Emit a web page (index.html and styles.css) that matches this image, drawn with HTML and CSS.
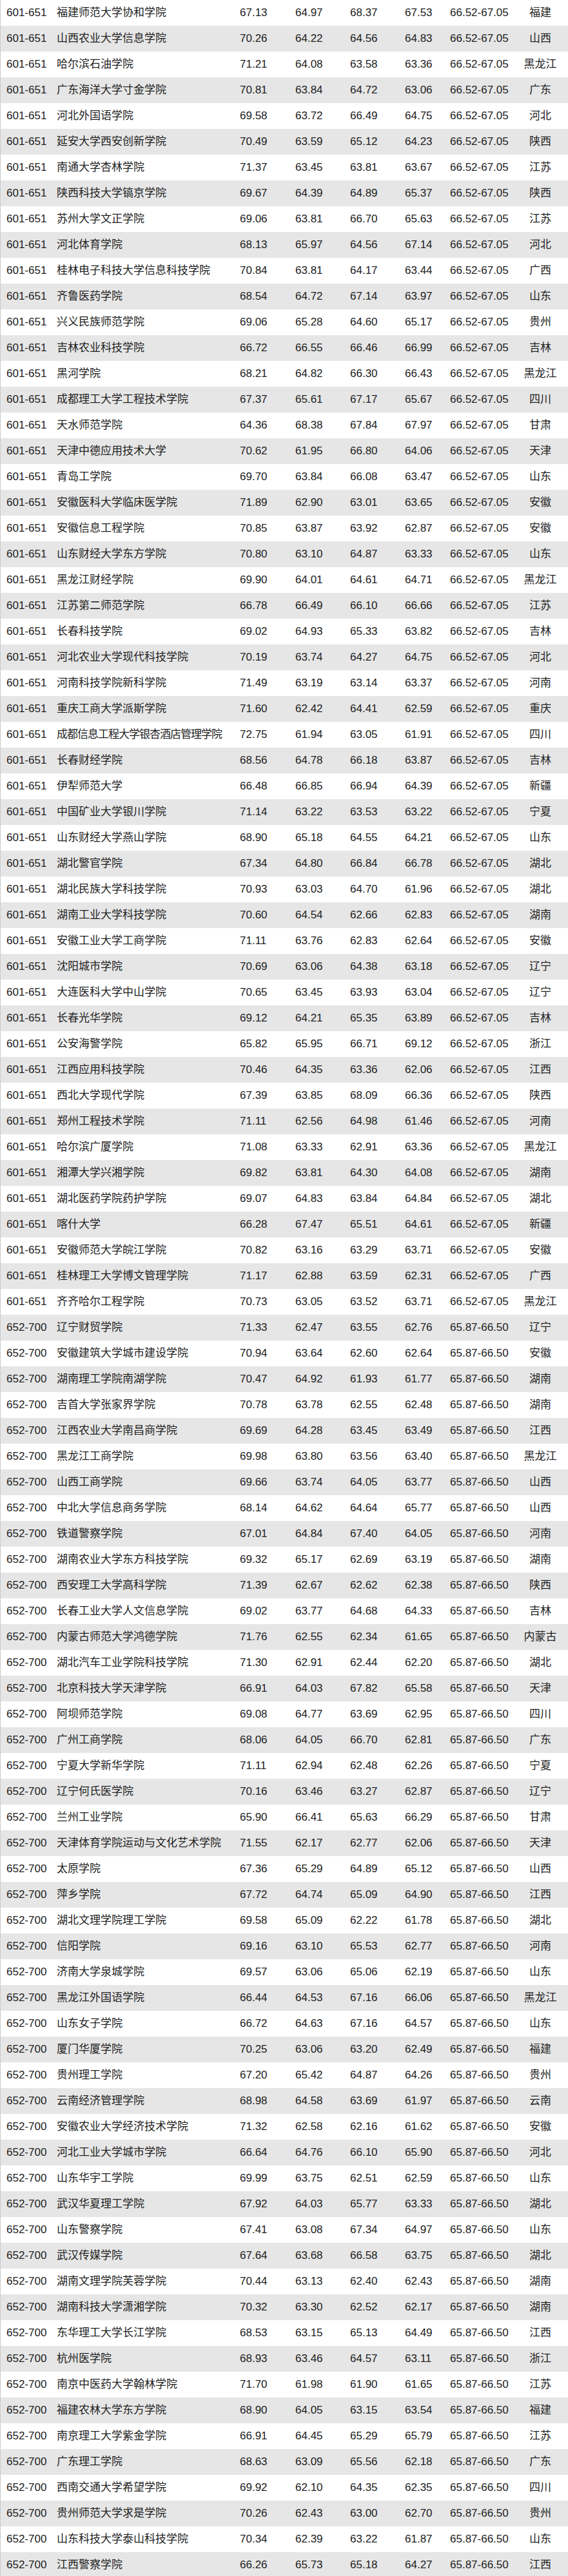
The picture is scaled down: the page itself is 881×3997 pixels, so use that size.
FILE: index.html
```html
<!DOCTYPE html>
<html lang="zh">
<head>
<meta charset="utf-8">
<title>排名</title>
<link rel="stylesheet" href="styles.css">
</head>
<body>
<div class="table">
<div class="row"><span class="rank">601-651</span><span class="name">福建师范大学协和学院</span><span class="n">67.13</span><span class="n">64.97</span><span class="n">68.37</span><span class="n">67.53</span><span class="range">66.52-67.05</span><span class="prov">福建</span></div>
<div class="row"><span class="rank">601-651</span><span class="name">山西农业大学信息学院</span><span class="n">70.26</span><span class="n">64.22</span><span class="n">64.56</span><span class="n">64.83</span><span class="range">66.52-67.05</span><span class="prov">山西</span></div>
<div class="row"><span class="rank">601-651</span><span class="name">哈尔滨石油学院</span><span class="n">71.21</span><span class="n">64.08</span><span class="n">63.58</span><span class="n">63.36</span><span class="range">66.52-67.05</span><span class="prov">黑龙江</span></div>
<div class="row"><span class="rank">601-651</span><span class="name">广东海洋大学寸金学院</span><span class="n">70.81</span><span class="n">63.84</span><span class="n">64.72</span><span class="n">63.06</span><span class="range">66.52-67.05</span><span class="prov">广东</span></div>
<div class="row"><span class="rank">601-651</span><span class="name">河北外国语学院</span><span class="n">69.58</span><span class="n">63.72</span><span class="n">66.49</span><span class="n">64.75</span><span class="range">66.52-67.05</span><span class="prov">河北</span></div>
<div class="row"><span class="rank">601-651</span><span class="name">延安大学西安创新学院</span><span class="n">70.49</span><span class="n">63.59</span><span class="n">65.12</span><span class="n">64.23</span><span class="range">66.52-67.05</span><span class="prov">陕西</span></div>
<div class="row"><span class="rank">601-651</span><span class="name">南通大学杏林学院</span><span class="n">71.37</span><span class="n">63.45</span><span class="n">63.81</span><span class="n">63.67</span><span class="range">66.52-67.05</span><span class="prov">江苏</span></div>
<div class="row"><span class="rank">601-651</span><span class="name">陕西科技大学镐京学院</span><span class="n">69.67</span><span class="n">64.39</span><span class="n">64.89</span><span class="n">65.37</span><span class="range">66.52-67.05</span><span class="prov">陕西</span></div>
<div class="row"><span class="rank">601-651</span><span class="name">苏州大学文正学院</span><span class="n">69.06</span><span class="n">63.81</span><span class="n">66.70</span><span class="n">65.63</span><span class="range">66.52-67.05</span><span class="prov">江苏</span></div>
<div class="row"><span class="rank">601-651</span><span class="name">河北体育学院</span><span class="n">68.13</span><span class="n">65.97</span><span class="n">64.56</span><span class="n">67.14</span><span class="range">66.52-67.05</span><span class="prov">河北</span></div>
<div class="row"><span class="rank">601-651</span><span class="name">桂林电子科技大学信息科技学院</span><span class="n">70.84</span><span class="n">63.81</span><span class="n">64.17</span><span class="n">63.44</span><span class="range">66.52-67.05</span><span class="prov">广西</span></div>
<div class="row"><span class="rank">601-651</span><span class="name">齐鲁医药学院</span><span class="n">68.54</span><span class="n">64.72</span><span class="n">67.14</span><span class="n">63.97</span><span class="range">66.52-67.05</span><span class="prov">山东</span></div>
<div class="row"><span class="rank">601-651</span><span class="name">兴义民族师范学院</span><span class="n">69.06</span><span class="n">65.28</span><span class="n">64.60</span><span class="n">65.17</span><span class="range">66.52-67.05</span><span class="prov">贵州</span></div>
<div class="row"><span class="rank">601-651</span><span class="name">吉林农业科技学院</span><span class="n">66.72</span><span class="n">66.55</span><span class="n">66.46</span><span class="n">66.99</span><span class="range">66.52-67.05</span><span class="prov">吉林</span></div>
<div class="row"><span class="rank">601-651</span><span class="name">黑河学院</span><span class="n">68.21</span><span class="n">64.82</span><span class="n">66.30</span><span class="n">66.43</span><span class="range">66.52-67.05</span><span class="prov">黑龙江</span></div>
<div class="row"><span class="rank">601-651</span><span class="name">成都理工大学工程技术学院</span><span class="n">67.37</span><span class="n">65.61</span><span class="n">67.17</span><span class="n">65.67</span><span class="range">66.52-67.05</span><span class="prov">四川</span></div>
<div class="row"><span class="rank">601-651</span><span class="name">天水师范学院</span><span class="n">64.36</span><span class="n">68.38</span><span class="n">67.84</span><span class="n">67.97</span><span class="range">66.52-67.05</span><span class="prov">甘肃</span></div>
<div class="row"><span class="rank">601-651</span><span class="name">天津中德应用技术大学</span><span class="n">70.62</span><span class="n">61.95</span><span class="n">66.80</span><span class="n">64.06</span><span class="range">66.52-67.05</span><span class="prov">天津</span></div>
<div class="row"><span class="rank">601-651</span><span class="name">青岛工学院</span><span class="n">69.70</span><span class="n">63.84</span><span class="n">66.08</span><span class="n">63.47</span><span class="range">66.52-67.05</span><span class="prov">山东</span></div>
<div class="row"><span class="rank">601-651</span><span class="name">安徽医科大学临床医学院</span><span class="n">71.89</span><span class="n">62.90</span><span class="n">63.01</span><span class="n">63.65</span><span class="range">66.52-67.05</span><span class="prov">安徽</span></div>
<div class="row"><span class="rank">601-651</span><span class="name">安徽信息工程学院</span><span class="n">70.85</span><span class="n">63.87</span><span class="n">63.92</span><span class="n">62.87</span><span class="range">66.52-67.05</span><span class="prov">安徽</span></div>
<div class="row"><span class="rank">601-651</span><span class="name">山东财经大学东方学院</span><span class="n">70.80</span><span class="n">63.10</span><span class="n">64.87</span><span class="n">63.33</span><span class="range">66.52-67.05</span><span class="prov">山东</span></div>
<div class="row"><span class="rank">601-651</span><span class="name">黑龙江财经学院</span><span class="n">69.90</span><span class="n">64.01</span><span class="n">64.61</span><span class="n">64.71</span><span class="range">66.52-67.05</span><span class="prov">黑龙江</span></div>
<div class="row"><span class="rank">601-651</span><span class="name">江苏第二师范学院</span><span class="n">66.78</span><span class="n">66.49</span><span class="n">66.10</span><span class="n">66.66</span><span class="range">66.52-67.05</span><span class="prov">江苏</span></div>
<div class="row"><span class="rank">601-651</span><span class="name">长春科技学院</span><span class="n">69.02</span><span class="n">64.93</span><span class="n">65.33</span><span class="n">63.82</span><span class="range">66.52-67.05</span><span class="prov">吉林</span></div>
<div class="row"><span class="rank">601-651</span><span class="name">河北农业大学现代科技学院</span><span class="n">70.19</span><span class="n">63.74</span><span class="n">64.27</span><span class="n">64.75</span><span class="range">66.52-67.05</span><span class="prov">河北</span></div>
<div class="row"><span class="rank">601-651</span><span class="name">河南科技学院新科学院</span><span class="n">71.49</span><span class="n">63.19</span><span class="n">63.14</span><span class="n">63.37</span><span class="range">66.52-67.05</span><span class="prov">河南</span></div>
<div class="row"><span class="rank">601-651</span><span class="name">重庆工商大学派斯学院</span><span class="n">71.60</span><span class="n">62.42</span><span class="n">64.41</span><span class="n">62.59</span><span class="range">66.52-67.05</span><span class="prov">重庆</span></div>
<div class="row"><span class="rank">601-651</span><span class="name long">成都信息工程大学银杏酒店管理学院</span><span class="n">72.75</span><span class="n">61.94</span><span class="n">63.05</span><span class="n">61.91</span><span class="range">66.52-67.05</span><span class="prov">四川</span></div>
<div class="row"><span class="rank">601-651</span><span class="name">长春财经学院</span><span class="n">68.56</span><span class="n">64.78</span><span class="n">66.18</span><span class="n">63.87</span><span class="range">66.52-67.05</span><span class="prov">吉林</span></div>
<div class="row"><span class="rank">601-651</span><span class="name">伊犁师范大学</span><span class="n">66.48</span><span class="n">66.85</span><span class="n">66.94</span><span class="n">64.39</span><span class="range">66.52-67.05</span><span class="prov">新疆</span></div>
<div class="row"><span class="rank">601-651</span><span class="name">中国矿业大学银川学院</span><span class="n">71.14</span><span class="n">63.22</span><span class="n">63.53</span><span class="n">63.22</span><span class="range">66.52-67.05</span><span class="prov">宁夏</span></div>
<div class="row"><span class="rank">601-651</span><span class="name">山东财经大学燕山学院</span><span class="n">68.90</span><span class="n">65.18</span><span class="n">64.55</span><span class="n">64.21</span><span class="range">66.52-67.05</span><span class="prov">山东</span></div>
<div class="row"><span class="rank">601-651</span><span class="name">湖北警官学院</span><span class="n">67.34</span><span class="n">64.80</span><span class="n">66.84</span><span class="n">66.78</span><span class="range">66.52-67.05</span><span class="prov">湖北</span></div>
<div class="row"><span class="rank">601-651</span><span class="name">湖北民族大学科技学院</span><span class="n">70.93</span><span class="n">63.03</span><span class="n">64.70</span><span class="n">61.96</span><span class="range">66.52-67.05</span><span class="prov">湖北</span></div>
<div class="row"><span class="rank">601-651</span><span class="name">湖南工业大学科技学院</span><span class="n">70.60</span><span class="n">64.54</span><span class="n">62.66</span><span class="n">62.83</span><span class="range">66.52-67.05</span><span class="prov">湖南</span></div>
<div class="row"><span class="rank">601-651</span><span class="name">安徽工业大学工商学院</span><span class="n">71.11</span><span class="n">63.76</span><span class="n">62.83</span><span class="n">62.64</span><span class="range">66.52-67.05</span><span class="prov">安徽</span></div>
<div class="row"><span class="rank">601-651</span><span class="name">沈阳城市学院</span><span class="n">70.69</span><span class="n">63.06</span><span class="n">64.38</span><span class="n">63.18</span><span class="range">66.52-67.05</span><span class="prov">辽宁</span></div>
<div class="row"><span class="rank">601-651</span><span class="name">大连医科大学中山学院</span><span class="n">70.65</span><span class="n">63.45</span><span class="n">63.93</span><span class="n">63.04</span><span class="range">66.52-67.05</span><span class="prov">辽宁</span></div>
<div class="row"><span class="rank">601-651</span><span class="name">长春光华学院</span><span class="n">69.12</span><span class="n">64.21</span><span class="n">65.35</span><span class="n">63.89</span><span class="range">66.52-67.05</span><span class="prov">吉林</span></div>
<div class="row"><span class="rank">601-651</span><span class="name">公安海警学院</span><span class="n">65.82</span><span class="n">65.95</span><span class="n">66.71</span><span class="n">69.12</span><span class="range">66.52-67.05</span><span class="prov">浙江</span></div>
<div class="row"><span class="rank">601-651</span><span class="name">江西应用科技学院</span><span class="n">70.46</span><span class="n">64.35</span><span class="n">63.36</span><span class="n">62.06</span><span class="range">66.52-67.05</span><span class="prov">江西</span></div>
<div class="row"><span class="rank">601-651</span><span class="name">西北大学现代学院</span><span class="n">67.39</span><span class="n">63.85</span><span class="n">68.09</span><span class="n">66.36</span><span class="range">66.52-67.05</span><span class="prov">陕西</span></div>
<div class="row"><span class="rank">601-651</span><span class="name">郑州工程技术学院</span><span class="n">71.11</span><span class="n">62.56</span><span class="n">64.98</span><span class="n">61.46</span><span class="range">66.52-67.05</span><span class="prov">河南</span></div>
<div class="row"><span class="rank">601-651</span><span class="name">哈尔滨广厦学院</span><span class="n">71.08</span><span class="n">63.33</span><span class="n">62.91</span><span class="n">63.36</span><span class="range">66.52-67.05</span><span class="prov">黑龙江</span></div>
<div class="row"><span class="rank">601-651</span><span class="name">湘潭大学兴湘学院</span><span class="n">69.82</span><span class="n">63.81</span><span class="n">64.30</span><span class="n">64.08</span><span class="range">66.52-67.05</span><span class="prov">湖南</span></div>
<div class="row"><span class="rank">601-651</span><span class="name">湖北医药学院药护学院</span><span class="n">69.07</span><span class="n">64.83</span><span class="n">63.84</span><span class="n">64.84</span><span class="range">66.52-67.05</span><span class="prov">湖北</span></div>
<div class="row"><span class="rank">601-651</span><span class="name">喀什大学</span><span class="n">66.28</span><span class="n">67.47</span><span class="n">65.51</span><span class="n">64.61</span><span class="range">66.52-67.05</span><span class="prov">新疆</span></div>
<div class="row"><span class="rank">601-651</span><span class="name">安徽师范大学皖江学院</span><span class="n">70.82</span><span class="n">63.16</span><span class="n">63.29</span><span class="n">63.71</span><span class="range">66.52-67.05</span><span class="prov">安徽</span></div>
<div class="row"><span class="rank">601-651</span><span class="name">桂林理工大学博文管理学院</span><span class="n">71.17</span><span class="n">62.88</span><span class="n">63.59</span><span class="n">62.31</span><span class="range">66.52-67.05</span><span class="prov">广西</span></div>
<div class="row"><span class="rank">601-651</span><span class="name">齐齐哈尔工程学院</span><span class="n">70.73</span><span class="n">63.05</span><span class="n">63.52</span><span class="n">63.71</span><span class="range">66.52-67.05</span><span class="prov">黑龙江</span></div>
<div class="row"><span class="rank">652-700</span><span class="name">辽宁财贸学院</span><span class="n">71.33</span><span class="n">62.47</span><span class="n">63.55</span><span class="n">62.76</span><span class="range">65.87-66.50</span><span class="prov">辽宁</span></div>
<div class="row"><span class="rank">652-700</span><span class="name">安徽建筑大学城市建设学院</span><span class="n">70.94</span><span class="n">63.64</span><span class="n">62.60</span><span class="n">62.64</span><span class="range">65.87-66.50</span><span class="prov">安徽</span></div>
<div class="row"><span class="rank">652-700</span><span class="name">湖南理工学院南湖学院</span><span class="n">70.47</span><span class="n">64.92</span><span class="n">61.93</span><span class="n">61.77</span><span class="range">65.87-66.50</span><span class="prov">湖南</span></div>
<div class="row"><span class="rank">652-700</span><span class="name">吉首大学张家界学院</span><span class="n">70.78</span><span class="n">63.78</span><span class="n">62.55</span><span class="n">62.48</span><span class="range">65.87-66.50</span><span class="prov">湖南</span></div>
<div class="row"><span class="rank">652-700</span><span class="name">江西农业大学南昌商学院</span><span class="n">69.69</span><span class="n">64.28</span><span class="n">63.45</span><span class="n">63.49</span><span class="range">65.87-66.50</span><span class="prov">江西</span></div>
<div class="row"><span class="rank">652-700</span><span class="name">黑龙江工商学院</span><span class="n">69.98</span><span class="n">63.80</span><span class="n">63.56</span><span class="n">63.40</span><span class="range">65.87-66.50</span><span class="prov">黑龙江</span></div>
<div class="row"><span class="rank">652-700</span><span class="name">山西工商学院</span><span class="n">69.66</span><span class="n">63.74</span><span class="n">64.05</span><span class="n">63.77</span><span class="range">65.87-66.50</span><span class="prov">山西</span></div>
<div class="row"><span class="rank">652-700</span><span class="name">中北大学信息商务学院</span><span class="n">68.14</span><span class="n">64.62</span><span class="n">64.64</span><span class="n">65.77</span><span class="range">65.87-66.50</span><span class="prov">山西</span></div>
<div class="row"><span class="rank">652-700</span><span class="name">铁道警察学院</span><span class="n">67.01</span><span class="n">64.84</span><span class="n">67.40</span><span class="n">64.05</span><span class="range">65.87-66.50</span><span class="prov">河南</span></div>
<div class="row"><span class="rank">652-700</span><span class="name">湖南农业大学东方科技学院</span><span class="n">69.32</span><span class="n">65.17</span><span class="n">62.69</span><span class="n">63.19</span><span class="range">65.87-66.50</span><span class="prov">湖南</span></div>
<div class="row"><span class="rank">652-700</span><span class="name">西安理工大学高科学院</span><span class="n">71.39</span><span class="n">62.67</span><span class="n">62.62</span><span class="n">62.38</span><span class="range">65.87-66.50</span><span class="prov">陕西</span></div>
<div class="row"><span class="rank">652-700</span><span class="name">长春工业大学人文信息学院</span><span class="n">69.02</span><span class="n">63.77</span><span class="n">64.68</span><span class="n">64.33</span><span class="range">65.87-66.50</span><span class="prov">吉林</span></div>
<div class="row"><span class="rank">652-700</span><span class="name">内蒙古师范大学鸿德学院</span><span class="n">71.76</span><span class="n">62.55</span><span class="n">62.34</span><span class="n">61.65</span><span class="range">65.87-66.50</span><span class="prov">内蒙古</span></div>
<div class="row"><span class="rank">652-700</span><span class="name">湖北汽车工业学院科技学院</span><span class="n">71.30</span><span class="n">62.91</span><span class="n">62.44</span><span class="n">62.20</span><span class="range">65.87-66.50</span><span class="prov">湖北</span></div>
<div class="row"><span class="rank">652-700</span><span class="name">北京科技大学天津学院</span><span class="n">66.91</span><span class="n">64.03</span><span class="n">67.82</span><span class="n">65.58</span><span class="range">65.87-66.50</span><span class="prov">天津</span></div>
<div class="row"><span class="rank">652-700</span><span class="name">阿坝师范学院</span><span class="n">69.08</span><span class="n">64.77</span><span class="n">63.69</span><span class="n">62.95</span><span class="range">65.87-66.50</span><span class="prov">四川</span></div>
<div class="row"><span class="rank">652-700</span><span class="name">广州工商学院</span><span class="n">68.06</span><span class="n">64.05</span><span class="n">66.70</span><span class="n">62.81</span><span class="range">65.87-66.50</span><span class="prov">广东</span></div>
<div class="row"><span class="rank">652-700</span><span class="name">宁夏大学新华学院</span><span class="n">71.11</span><span class="n">62.94</span><span class="n">62.48</span><span class="n">62.26</span><span class="range">65.87-66.50</span><span class="prov">宁夏</span></div>
<div class="row"><span class="rank">652-700</span><span class="name">辽宁何氏医学院</span><span class="n">70.16</span><span class="n">63.46</span><span class="n">63.27</span><span class="n">62.87</span><span class="range">65.87-66.50</span><span class="prov">辽宁</span></div>
<div class="row"><span class="rank">652-700</span><span class="name">兰州工业学院</span><span class="n">65.90</span><span class="n">66.41</span><span class="n">65.63</span><span class="n">66.29</span><span class="range">65.87-66.50</span><span class="prov">甘肃</span></div>
<div class="row"><span class="rank">652-700</span><span class="name">天津体育学院运动与文化艺术学院</span><span class="n">71.55</span><span class="n">62.17</span><span class="n">62.77</span><span class="n">62.06</span><span class="range">65.87-66.50</span><span class="prov">天津</span></div>
<div class="row"><span class="rank">652-700</span><span class="name">太原学院</span><span class="n">67.36</span><span class="n">65.29</span><span class="n">64.89</span><span class="n">65.12</span><span class="range">65.87-66.50</span><span class="prov">山西</span></div>
<div class="row"><span class="rank">652-700</span><span class="name">萍乡学院</span><span class="n">67.72</span><span class="n">64.74</span><span class="n">65.09</span><span class="n">64.90</span><span class="range">65.87-66.50</span><span class="prov">江西</span></div>
<div class="row"><span class="rank">652-700</span><span class="name">湖北文理学院理工学院</span><span class="n">69.58</span><span class="n">65.09</span><span class="n">62.22</span><span class="n">61.78</span><span class="range">65.87-66.50</span><span class="prov">湖北</span></div>
<div class="row"><span class="rank">652-700</span><span class="name">信阳学院</span><span class="n">69.16</span><span class="n">63.10</span><span class="n">65.53</span><span class="n">62.77</span><span class="range">65.87-66.50</span><span class="prov">河南</span></div>
<div class="row"><span class="rank">652-700</span><span class="name">济南大学泉城学院</span><span class="n">69.57</span><span class="n">63.06</span><span class="n">65.06</span><span class="n">62.19</span><span class="range">65.87-66.50</span><span class="prov">山东</span></div>
<div class="row"><span class="rank">652-700</span><span class="name">黑龙江外国语学院</span><span class="n">66.44</span><span class="n">64.53</span><span class="n">67.16</span><span class="n">66.06</span><span class="range">65.87-66.50</span><span class="prov">黑龙江</span></div>
<div class="row"><span class="rank">652-700</span><span class="name">山东女子学院</span><span class="n">66.72</span><span class="n">64.63</span><span class="n">67.16</span><span class="n">64.57</span><span class="range">65.87-66.50</span><span class="prov">山东</span></div>
<div class="row"><span class="rank">652-700</span><span class="name">厦门华厦学院</span><span class="n">70.25</span><span class="n">63.06</span><span class="n">63.20</span><span class="n">62.49</span><span class="range">65.87-66.50</span><span class="prov">福建</span></div>
<div class="row"><span class="rank">652-700</span><span class="name">贵州理工学院</span><span class="n">67.20</span><span class="n">65.42</span><span class="n">64.87</span><span class="n">64.26</span><span class="range">65.87-66.50</span><span class="prov">贵州</span></div>
<div class="row"><span class="rank">652-700</span><span class="name">云南经济管理学院</span><span class="n">68.98</span><span class="n">64.58</span><span class="n">63.69</span><span class="n">61.97</span><span class="range">65.87-66.50</span><span class="prov">云南</span></div>
<div class="row"><span class="rank">652-700</span><span class="name">安徽农业大学经济技术学院</span><span class="n">71.32</span><span class="n">62.58</span><span class="n">62.16</span><span class="n">61.62</span><span class="range">65.87-66.50</span><span class="prov">安徽</span></div>
<div class="row"><span class="rank">652-700</span><span class="name">河北工业大学城市学院</span><span class="n">66.64</span><span class="n">64.76</span><span class="n">66.10</span><span class="n">65.90</span><span class="range">65.87-66.50</span><span class="prov">河北</span></div>
<div class="row"><span class="rank">652-700</span><span class="name">山东华宇工学院</span><span class="n">69.99</span><span class="n">63.75</span><span class="n">62.51</span><span class="n">62.59</span><span class="range">65.87-66.50</span><span class="prov">山东</span></div>
<div class="row"><span class="rank">652-700</span><span class="name">武汉华夏理工学院</span><span class="n">67.92</span><span class="n">64.03</span><span class="n">65.77</span><span class="n">63.33</span><span class="range">65.87-66.50</span><span class="prov">湖北</span></div>
<div class="row"><span class="rank">652-700</span><span class="name">山东警察学院</span><span class="n">67.41</span><span class="n">63.08</span><span class="n">67.34</span><span class="n">64.97</span><span class="range">65.87-66.50</span><span class="prov">山东</span></div>
<div class="row"><span class="rank">652-700</span><span class="name">武汉传媒学院</span><span class="n">67.64</span><span class="n">63.68</span><span class="n">66.58</span><span class="n">63.75</span><span class="range">65.87-66.50</span><span class="prov">湖北</span></div>
<div class="row"><span class="rank">652-700</span><span class="name">湖南文理学院芙蓉学院</span><span class="n">70.44</span><span class="n">63.13</span><span class="n">62.40</span><span class="n">62.43</span><span class="range">65.87-66.50</span><span class="prov">湖南</span></div>
<div class="row"><span class="rank">652-700</span><span class="name">湖南科技大学潇湘学院</span><span class="n">70.32</span><span class="n">63.30</span><span class="n">62.52</span><span class="n">62.17</span><span class="range">65.87-66.50</span><span class="prov">湖南</span></div>
<div class="row"><span class="rank">652-700</span><span class="name">东华理工大学长江学院</span><span class="n">68.53</span><span class="n">63.15</span><span class="n">65.13</span><span class="n">64.49</span><span class="range">65.87-66.50</span><span class="prov">江西</span></div>
<div class="row"><span class="rank">652-700</span><span class="name">杭州医学院</span><span class="n">68.93</span><span class="n">63.46</span><span class="n">64.57</span><span class="n">63.11</span><span class="range">65.87-66.50</span><span class="prov">浙江</span></div>
<div class="row"><span class="rank">652-700</span><span class="name">南京中医药大学翰林学院</span><span class="n">71.70</span><span class="n">61.98</span><span class="n">61.90</span><span class="n">61.65</span><span class="range">65.87-66.50</span><span class="prov">江苏</span></div>
<div class="row"><span class="rank">652-700</span><span class="name">福建农林大学东方学院</span><span class="n">68.90</span><span class="n">64.05</span><span class="n">63.15</span><span class="n">63.54</span><span class="range">65.87-66.50</span><span class="prov">福建</span></div>
<div class="row"><span class="rank">652-700</span><span class="name">南京理工大学紫金学院</span><span class="n">66.91</span><span class="n">64.45</span><span class="n">65.29</span><span class="n">65.79</span><span class="range">65.87-66.50</span><span class="prov">江苏</span></div>
<div class="row"><span class="rank">652-700</span><span class="name">广东理工学院</span><span class="n">68.63</span><span class="n">63.09</span><span class="n">65.56</span><span class="n">62.18</span><span class="range">65.87-66.50</span><span class="prov">广东</span></div>
<div class="row"><span class="rank">652-700</span><span class="name">西南交通大学希望学院</span><span class="n">69.92</span><span class="n">62.10</span><span class="n">64.35</span><span class="n">62.35</span><span class="range">65.87-66.50</span><span class="prov">四川</span></div>
<div class="row"><span class="rank">652-700</span><span class="name">贵州师范大学求是学院</span><span class="n">70.26</span><span class="n">62.43</span><span class="n">63.00</span><span class="n">62.70</span><span class="range">65.87-66.50</span><span class="prov">贵州</span></div>
<div class="row"><span class="rank">652-700</span><span class="name">山东科技大学泰山科技学院</span><span class="n">70.34</span><span class="n">62.39</span><span class="n">63.22</span><span class="n">61.87</span><span class="range">65.87-66.50</span><span class="prov">山东</span></div>
<div class="row"><span class="rank">652-700</span><span class="name">江西警察学院</span><span class="n">66.26</span><span class="n">65.73</span><span class="n">65.18</span><span class="n">64.27</span><span class="range">65.87-66.50</span><span class="prov">江西</span></div>
</div>
</body>
</html>
```

FILE: styles.css
```css
html, body {
  margin: 0;
  padding: 0;
  background: #ffffff;
}

.table {
  width: 881px;
  box-sizing: border-box;
  border-left: 1px solid #c9c9c9;
  font-family: "Liberation Sans", "Noto Sans CJK SC", sans-serif;
  font-size: 17px;
  color: #222222;
}

.row {
  display: grid;
  grid-template-columns: 87px 284px 86px 85px 85px 70px 110px 60px;
  height: 40px;
  line-height: 40px;
  white-space: nowrap;
}

.row:nth-child(even) {
  background: #e6e6e6;
}

.rank {
  padding-left: 9px;
}

.name {
  overflow: visible;
}

.name.long {
  letter-spacing: -1px;
}

.prov {
  text-align: center;
}
```
